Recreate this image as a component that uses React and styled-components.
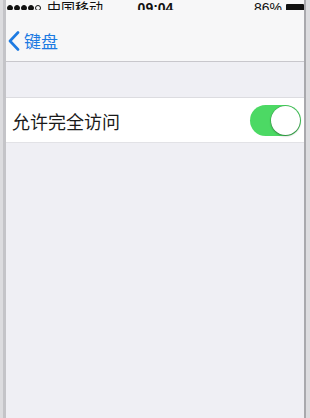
import React, { useState } from 'react';
import styled, { createGlobalStyle } from 'styled-components';

const Global = createGlobalStyle`
  html, body { margin: 0; padding: 0; }
  body {
    background: #e2e2e4;
    font-family: "Noto Sans CJK SC", "Liberation Sans", sans-serif;
  }
`;

const Frame = styled.div`
  height: 418px;
  display: flex;
  padding: 0 4px 0 3px;
  background: #dcdcdf;
  overflow: hidden;
`;

const Screen = styled.div`
  flex: 1;
  display: flex;
  flex-direction: column;
  background: #efeff4;
  border-left: 3px solid #c4c4c8;
  border-right: 2px solid #a9a9ad;
`;

const StatusBar = styled.div`
  height: 10px;
  overflow: hidden;
  display: flex;
  align-items: flex-end;
  justify-content: space-between;
  padding: 0 0 0 1px;
  background: #f7f7f8;
  font-family: "Liberation Sans", "Noto Sans CJK SC", sans-serif;
  font-size: 14px;
  line-height: 16px;
  color: #111;
`;

const Carrier = styled.div`
  display: flex;
  align-items: center;
  gap: 6px;
  width: 100px;
  margin-bottom: -6px;
`;

const Dots = styled.div`
  display: flex;
  gap: 1px;
`;

const Dot = styled.span`
  width: 6px;
  height: 6px;
  border-radius: 50%;
  box-sizing: border-box;
  background: ${({ empty }) => (empty ? 'transparent' : '#111')};
  border: 1px solid #111;
`;

const Time = styled.div`
  font-weight: 700;
  margin-bottom: -6px;
`;

const Battery = styled.div`
  display: flex;
  align-items: center;
  gap: 4px;
  width: 100px;
  justify-content: flex-end;
  margin-bottom: -6px;
`;

const BatteryBody = styled.span`
  width: 18px;
  height: 8px;
  background: #111;
  border-radius: 1px;
`;

const NavBar = styled.div`
  height: 51px;
  display: flex;
  align-items: center;
  padding: 0 0 0 2px;
  background: #f7f7f8;
  border-bottom: 1px solid #c8c7cc;
`;

const Back = styled.div`
  display: flex;
  align-items: center;
  gap: 4px;
  color: #1c7ae2;
  font-size: 17px;
  margin-top: 10px;
`;

const Gap = styled.div`
  height: 35px;
  border-bottom: 1px solid #dcdce0;
`;

const Row = styled.div`
  height: 44px;
  display: flex;
  align-items: center;
  justify-content: space-between;
  padding: 0 3px 0 6px;
  background: #fff;
  border-bottom: 1px solid #e2e2e6;
`;

const Label = styled.span`
  font-size: 18px;
  color: #1a1a1a;
  margin-top: 2px;
`;

const Track = styled.button`
  width: 51px;
  height: 31px;
  padding: 0 1px;
  border: none;
  border-radius: 16px;
  background: ${({ on }) => (on ? '#4cd964' : '#e5e5ea')};
  display: flex;
  align-items: center;
  justify-content: ${({ on }) => (on ? 'flex-end' : 'flex-start')};
  cursor: pointer;
`;

const Knob = styled.span`
  width: 29px;
  height: 29px;
  border-radius: 50%;
  background: #fff;
  box-shadow: 0 1px 2px rgba(0, 0, 0, 0.35), 0 0 0 0.5px rgba(0, 0, 0, 0.2);
`;

export default function App() {
  const [on, setOn] = useState(true);
  return (
    <>
      <Global />
      <Frame>
        <Screen>
          <StatusBar>
            <Carrier>
              <Dots>
                <Dot /><Dot /><Dot /><Dot /><Dot empty />
              </Dots>
              <span>中国移动</span>
            </Carrier>
            <Time>09:04</Time>
            <Battery>
              <span>86%</span>
              <BatteryBody />
            </Battery>
          </StatusBar>
          <NavBar>
            <Back>
              <svg width="12" height="20" viewBox="0 0 12 20">
                <path d="M10 1.5 L2 10 L10 18.5" fill="none" stroke="#1c7ae2" strokeWidth="2.6" strokeLinecap="round" strokeLinejoin="round" />
              </svg>
              <span>键盘</span>
            </Back>
          </NavBar>
          <Gap />
          <Row>
            <Label>允许完全访问</Label>
            <Track on={on} onClick={() => setOn(!on)}>
              <Knob />
            </Track>
          </Row>
        </Screen>
      </Frame>
    </>
  );
}
